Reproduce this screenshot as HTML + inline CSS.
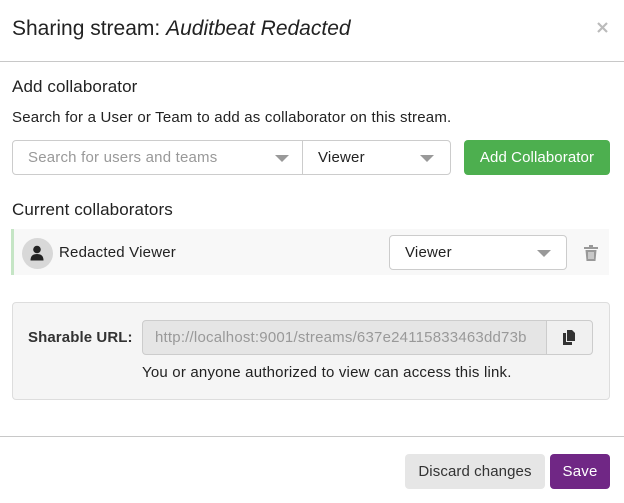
<!DOCTYPE html>
<html><head><meta charset="utf-8"><style>
*{box-sizing:border-box;margin:0;padding:0}
body{width:624px;height:503px;background:#fff;font-family:"Liberation Sans",sans-serif;color:#222;position:relative;overflow:hidden}
.a{position:absolute}
.t{font-size:15px;letter-spacing:0.2px}
.sel{position:absolute;border:1px solid #ccc;background:#fff;font-size:15px;letter-spacing:0.2px;display:flex;align-items:center;padding-left:15px}
.car{position:absolute;width:0;height:0;border-left:7px solid transparent;border-right:7px solid transparent;border-top:7px solid #999;top:50%;margin-top:-3px}
</style></head><body>
<div class="a" style="left:12px;top:17px;font-size:21px;color:#222">Sharing stream: <i>Auditbeat Redacted</i></div>
<svg class="a" style="left:597px;top:22px" width="11" height="11"><path d="M1 1L10 10M10 1L1 10" stroke="#bbb" stroke-width="2.2"/></svg>
<div class="a" style="left:0;top:61px;width:624px;height:1px;background:#c8c8c8"></div>
<div class="a" style="left:12px;top:77px;font-size:17px;letter-spacing:0.1px">Add collaborator</div>
<div class="a t" style="left:12px;top:109px">Search for a User or Team to add as collaborator on this stream.</div>
<div class="sel" style="left:12px;top:140px;width:291px;height:35px;border-radius:4px 0 0 4px;color:#999">Search for users and teams<span class="car" style="left:262px"></span></div>
<div class="sel" style="left:302px;top:140px;width:149px;height:35px;border-radius:0 4px 4px 0;color:#222">Viewer<span class="car" style="left:117px"></span></div>
<div class="a t" style="left:464px;top:140px;width:146px;height:35px;background:#4daf4f;border-radius:4px;color:#fff;display:flex;align-items:center;justify-content:center;letter-spacing:0.1px">Add Collaborator</div>
<div class="a" style="left:12px;top:200px;font-size:17px;letter-spacing:0.1px">Current collaborators</div>
<div class="a" style="left:11px;top:229px;width:598px;height:46px;background:#f8f8f8;border-left:3px solid #c5e5c5"></div>
<div class="a" style="left:22px;top:238px;width:31px;height:31px;border-radius:50%;background:#d8d8d8"></div>
<svg class="a" style="left:30px;top:245px" width="14" height="16"><circle cx="7" cy="4.5" r="3.8" fill="#222"/><path d="M0.5 15.5Q0.5 9 7 9Q13.5 9 13.5 15.5Z" fill="#222"/></svg>
<div class="a t" style="left:59px;top:244px">Redacted Viewer</div>
<div class="sel" style="left:389px;top:235px;width:178px;height:35px;border-radius:4px;color:#222">Viewer<span class="car" style="left:147px"></span></div>
<svg class="a" style="left:584px;top:245px" width="14" height="16"><rect x="0" y="2" width="14" height="2" fill="#999"/><rect x="5" y="0" width="4" height="2" fill="#999"/><path d="M1.5 5H12.5L11.5 16H2.5Z" fill="#999"/><path d="M5 7V14M7 7V14M9 7V14" stroke="#f8f8f8" stroke-width="1"/></svg>
<div class="a" style="left:12px;top:302px;width:598px;height:98px;background:#f5f5f5;border:1px solid #ddd;border-radius:4px"></div>
<div class="a" style="left:28px;top:329px;font-size:15px;font-weight:bold;color:#333;letter-spacing:0.1px">Sharable URL:</div>
<div class="a t" style="left:142px;top:320px;width:405px;height:35px;background:#e5e5e5;border:1px solid #ccc;border-radius:4px 0 0 4px;color:#999;display:flex;align-items:center;padding-left:12px;white-space:nowrap;overflow:hidden">http://localhost:9001/streams/637e24115833463dd73b</div>
<div class="a" style="left:546px;top:320px;width:47px;height:35px;background:#f0f0f0;border:1px solid #ccc;border-radius:0 4px 4px 0"></div>
<svg class="a" style="left:562px;top:330px" width="14" height="15"><path d="M1 3H4V12H10V15H1Z" fill="#333"/><path d="M5 0H10L13 3V11H5Z" fill="#333"/></svg>
<div class="a t" style="left:142px;top:364px;color:#222">You or anyone authorized to view can access this link.</div>
<div class="a" style="left:0;top:436px;width:624px;height:1px;background:#c8c8c8"></div>
<div class="a t" style="left:405px;top:454px;width:140px;height:35px;background:#e6e6e6;border-radius:4px;color:#333;display:flex;align-items:center;justify-content:center;letter-spacing:0.1px">Discard changes</div>
<div class="a t" style="left:550px;top:454px;width:60px;height:35px;background:#702785;border-radius:4px;color:#fff;display:flex;align-items:center;justify-content:center">Save</div>
</body></html>
